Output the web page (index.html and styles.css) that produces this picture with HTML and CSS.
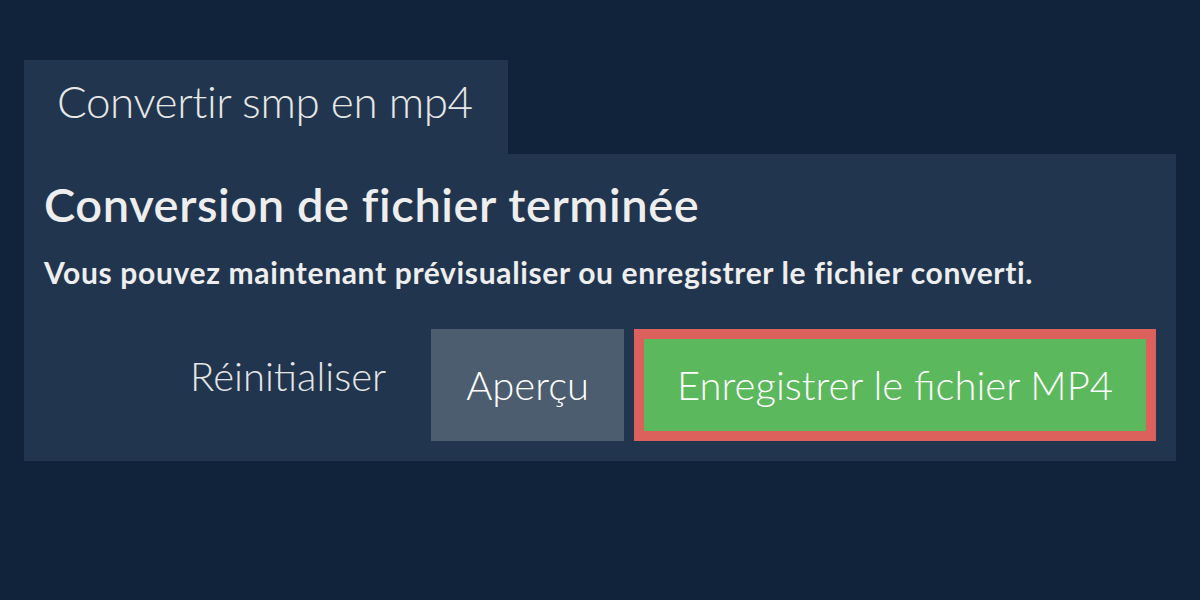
FILE: index.html
```html
<!DOCTYPE html>
<html lang="fr">
<head>
<meta charset="utf-8">
<title>Convertir smp en mp4</title>
<link rel="stylesheet" href="styles.css">
</head>
<body>
<main class="page">
  <div class="tab">Convertir smp en mp4</div>
  <section class="panel">
    <h1 class="title">Conversion de fichier terminée</h1>
    <p class="subtitle">Vous pouvez maintenant prévisualiser ou enregistrer le fichier converti.</p>
    <div class="actions">
      <button class="btn btn-reset" type="button">Réinitialiser</button>
      <button class="btn btn-preview" type="button">Aperçu</button>
      <button class="btn btn-save" type="button">Enregistrer le fichier MP4</button>
    </div>
  </section>
</main>
</body>
</html>
```
FILE: styles.css
```css
html, body {
  margin: 0;
  padding: 0;
  height: 100%;
}
body {
  background: #10233a;
  font-family: Lato, "Open Sans", "Liberation Sans", sans-serif;
  color: #eeeeee;
}
.page {
  padding: 60px 24px 0 24px;
  display: flex;
  flex-direction: column;
  align-items: flex-start;
}
.tab {
  background: #21364e;
  font-weight: 300;
  font-size: 44px;
  line-height: 54px;
  letter-spacing: -0.4px;
  padding: 14px 35px 26px 33px;
  color: #e8e8e8;
}
.panel {
  align-self: stretch;
  background: #21364e;
  padding: 23px 20px 20px 20px;
  display: flex;
  flex-direction: column;
}
.title {
  margin: 0;
  font-size: 47px;
  line-height: 54px;
  font-weight: 600;
  letter-spacing: 0.58px;
  color: #eeeeee;
}
.subtitle {
  margin: 24px 0 0 0;
  font-size: 30px;
  line-height: 35px;
  font-weight: 700;
  letter-spacing: 0.65px;
  color: #eeeeee;
}
.actions {
  margin-top: 39px;
  display: flex;
  justify-content: flex-end;
  align-items: stretch;
  gap: 10px;
}
.btn {
  font-family: inherit;
  font-weight: 300;
  font-size: 40px;
  line-height: 48px;
  border: 0;
  margin: 0;
  color: #ffffff;
  background: transparent;
  padding: 32px 35px;
  cursor: pointer;
}
.btn-reset {
  align-self: flex-start;
  padding-top: 23px;
  padding-bottom: 0;
  color: #e6e6e6;
}
.btn-preview {
  background: #4c5d6f;
}
.btn-save {
  background: #5cb85c;
  border: 10px solid #dc605c;
  padding: 22px 33px;
}
```
